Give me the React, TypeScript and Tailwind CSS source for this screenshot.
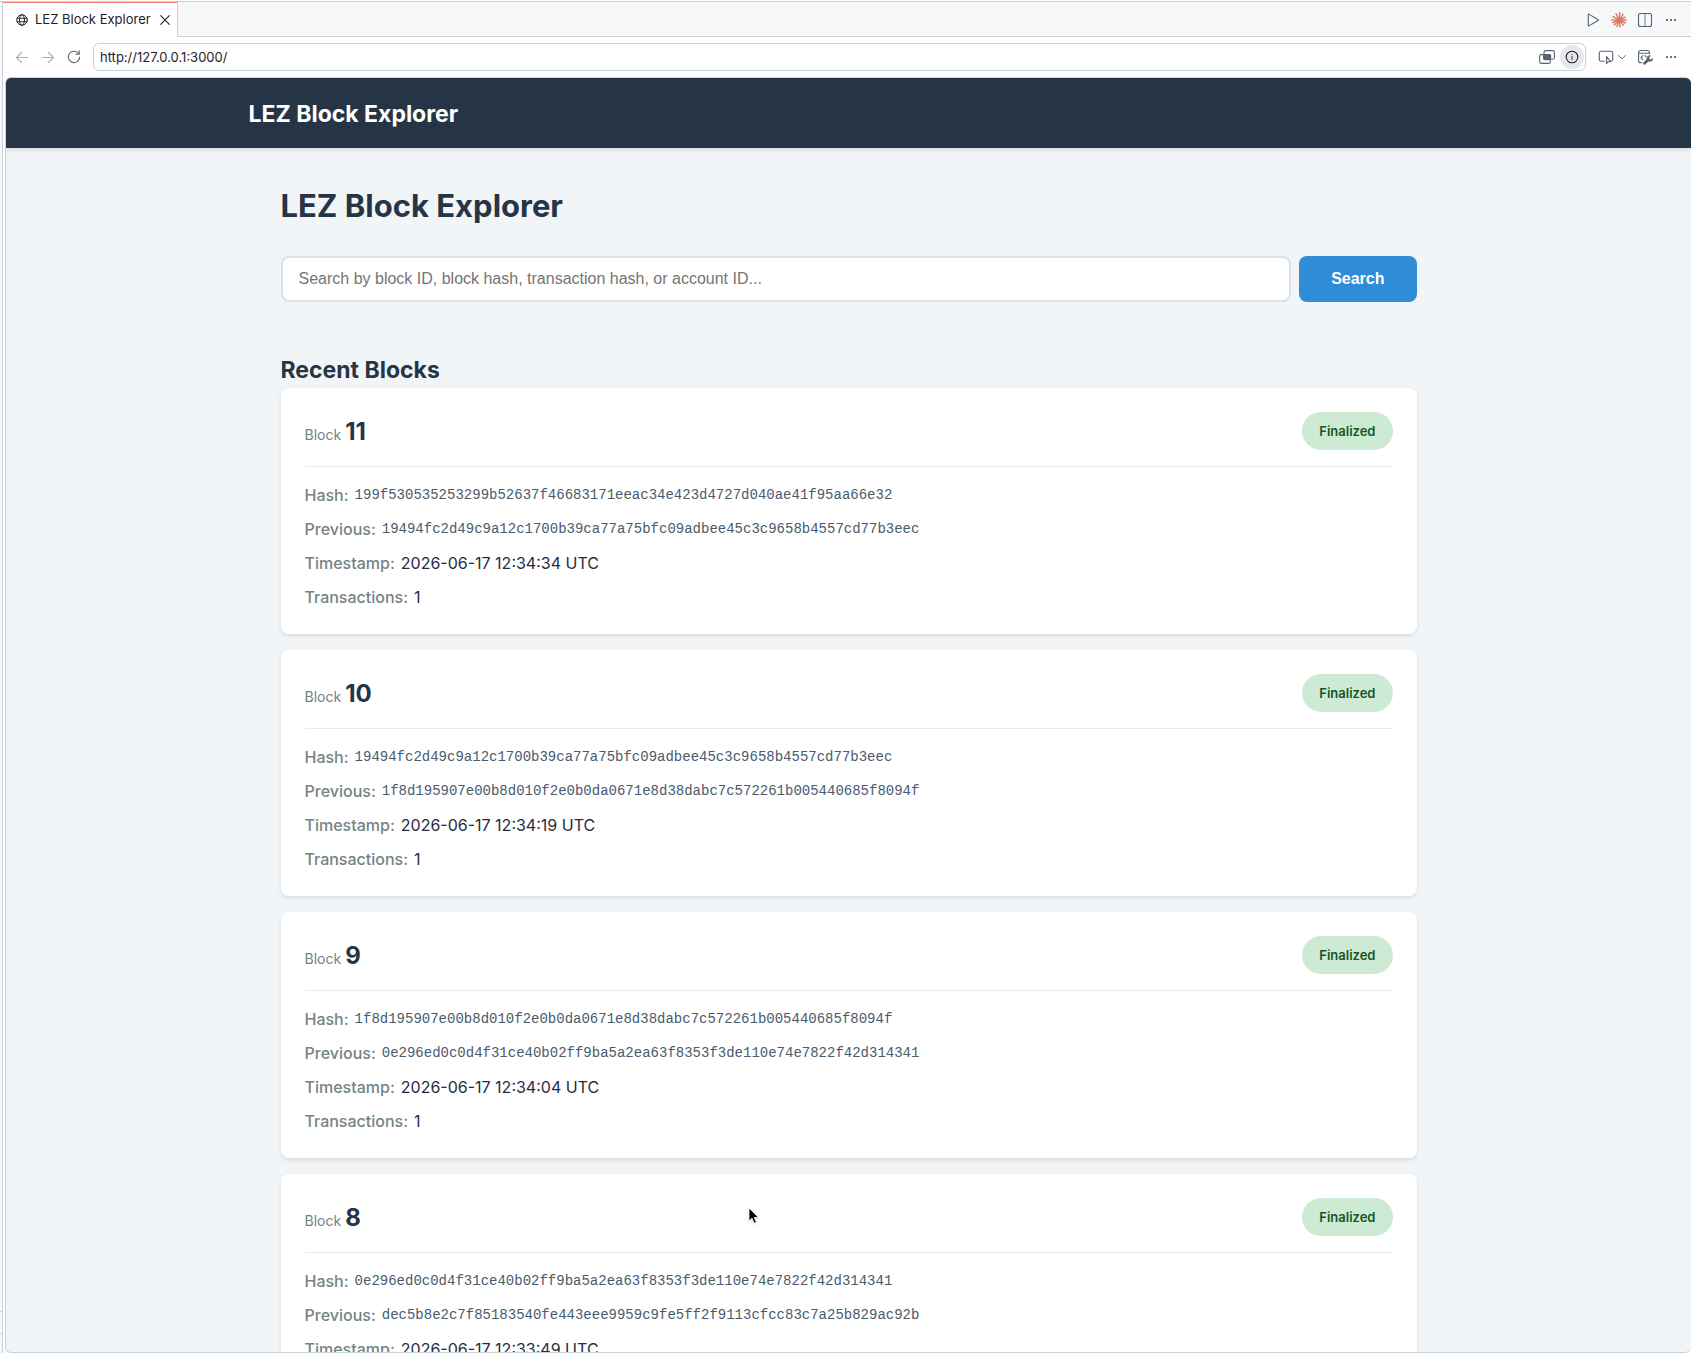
import React from 'react';

const blocks = [
  {
    id: 11,
    hash: '199f530535253299b52637f46683171eeac34e423d4727d040ae41f95aa66e32',
    previous: '19494fc2d49c9a12c1700b39ca77a75bfc09adbee45c3c9658b4557cd77b3eec',
    timestamp: '2026-06-17 12:34:34 UTC',
    transactions: 1,
  },
  {
    id: 10,
    hash: '19494fc2d49c9a12c1700b39ca77a75bfc09adbee45c3c9658b4557cd77b3eec',
    previous: '1f8d195907e00b8d010f2e0b0da0671e8d38dabc7c572261b005440685f8094f',
    timestamp: '2026-06-17 12:34:19 UTC',
    transactions: 1,
  },
  {
    id: 9,
    hash: '1f8d195907e00b8d010f2e0b0da0671e8d38dabc7c572261b005440685f8094f',
    previous: '0e296ed0c0d4f31ce40b02ff9ba5a2ea63f8353f3de110e74e7822f42d314341',
    timestamp: '2026-06-17 12:34:04 UTC',
    transactions: 1,
  },
  {
    id: 8,
    hash: '0e296ed0c0d4f31ce40b02ff9ba5a2ea63f8353f3de110e74e7822f42d314341',
    previous: 'dec5b8e2c7f85183540fe443eee9959c9fe5ff2f9113cfcc83c7a25b829ac92b',
    timestamp: '2026-06-17 12:33:49 UTC',
    transactions: 1,
  },
];

type IconProps = { children: React.ReactNode; className?: string };

function Icon({ children, className = 'size-4' }: IconProps) {
  return (
    <svg
      viewBox="0 0 16 16"
      className={`shrink-0 ${className}`}
      fill="none"
      stroke="currentColor"
      strokeWidth="1.1"
      strokeLinecap="round"
      strokeLinejoin="round"
      aria-hidden="true"
    >
      {children}
    </svg>
  );
}

function IconButton({ label, className = 'text-[#59636e]', children }: { label: string; className?: string; children: React.ReactNode }) {
  return (
    <button type="button" aria-label={label} className={`flex h-6 w-[26px] items-center justify-center ${className}`}>
      {children}
    </button>
  );
}

function Dots() {
  return (
    <Icon>
      <g fill="currentColor" stroke="none">
        <rect x="3" y="7" width="2" height="2" rx="0.5" />
        <rect x="7" y="7" width="2" height="2" rx="0.5" />
        <rect x="11" y="7" width="2" height="2" rx="0.5" />
      </g>
    </Icon>
  );
}

const rays = [
  [8.8, 0.4], [12.4, 1.8], [14.4, 5], [15.8, 8], [14.8, 11], [12.6, 13.6],
  [9.2, 15.6], [5.8, 15], [3, 13.2], [1.2, 10.8], [0.2, 8], [1.6, 4.4], [4.8, 1.2],
];

function Starburst() {
  return (
    <Icon>
      <g strokeWidth="1.4" strokeLinecap="butt">
        {rays.map(([x, y]) => (
          <line key={`${x}-${y}`} x1="8" y1="8" x2={x} y2={y} />
        ))}
      </g>
      <circle cx="8" cy="8" r="2.2" fill="currentColor" stroke="none" />
    </Icon>
  );
}

function TabBar() {
  return (
    <div className="flex h-[35px] shrink-0">
      <div className="flex items-center gap-1.5 border-t border-r border-t-[#f9826c] border-r-[#c9d1d9] bg-white pr-1 pl-3 text-[13px] text-[#1f2328]">
        <Icon className="size-[14px]">
          <circle cx="8" cy="8" r="6" />
          <ellipse cx="8" cy="8" rx="2.8" ry="6" />
          <path d="M2.6 6h10.8M2.6 10h10.8" />
        </Icon>
        <span className="whitespace-nowrap">LEZ Block Explorer</span>
        <button type="button" aria-label="Close tab" className="flex items-center">
          <Icon>
            <path d="M3.7 3.7l8.6 8.6M12.3 3.7l-8.6 8.6" />
          </Icon>
        </button>
      </div>
      <div className="flex flex-1 items-center justify-end border-b border-[#c9d1d9] bg-[#f6f8fa] pt-0.5 pr-[7px]">
        <IconButton label="Run">
          <Icon><path d="M3.3 2.4v11.2c0 .4.3.5.6.3l9.2-5.4c.3-.2.3-.6 0-.8L3.9 2.1c-.3-.2-.6 0-.6.3z" /></Icon>
        </IconButton>
        <IconButton label="Assistant" className="text-[#d97757]"><Starburst /></IconButton>
        <IconButton label="Split editor">
          <Icon>
            <rect x="1.5" y="1.5" width="13" height="13" rx="2" />
            <path d="M8 2v12" strokeWidth="0.8" />
          </Icon>
        </IconButton>
        <IconButton label="More tab actions"><Dots /></IconButton>
      </div>
    </div>
  );
}

function AddressBar() {
  return (
    <div className="flex h-10 shrink-0 items-center bg-white pr-[7px] pl-[6px]">
      <IconButton label="Back" className="text-[#a8adb3]">
        <Icon><path d="M13.5 8.5h-11M7.5 3.5L2.5 8.5l5 5" /></Icon>
      </IconButton>
      <IconButton label="Forward" className="text-[#a8adb3]">
        <Icon><path d="M2.5 8.5h11M8.5 3.5l5 5-5 5" /></Icon>
      </IconButton>
      <IconButton label="Reload">
        <Icon><path d="M12.9 5A5.7 5.7 0 1 0 13.7 8M13.2 1.8V5.3H9.7" /></Icon>
      </IconButton>
      <div className="ml-[6px] flex h-7 flex-1 items-center rounded-md border border-[#c9d1d9] bg-white pr-[1px] pl-[6px]">
        <input
          type="text"
          aria-label="Address"
          defaultValue="http://127.0.0.1:3000/"
          className="min-w-0 flex-1 bg-transparent pt-0.5 text-[13px] text-[#1f2328] outline-none"
        />
        <IconButton label="Share with chat">
          <Icon>
            <rect x="5" y="1.6" width="10.4" height="8.6" rx="1.6" />
            <path d="M4.2 5.6H2.3A1.6 1.6 0 0 0 .7 7.2v5.6a1.6 1.6 0 0 0 1.6 1.6h7.4a1.6 1.6 0 0 0 1.6-1.6v-1.6" />
            <rect x="4.6" y="5.6" width="7" height="5" rx="1" fill="currentColor" />
          </Icon>
        </IconButton>
        <button type="button" aria-label="Site information" className="flex size-6 items-center justify-center rounded-full bg-[#e6e7ed] text-[#1f2328]">
          <Icon>
            <circle cx="8" cy="8" r="5.8" />
            <path d="M8 7.4v3.2M8 5.3v.2" stroke="#59636e" strokeWidth="1.3" />
          </Icon>
        </button>
      </div>
      <button type="button" aria-label="Select element" className="mr-0.5 ml-3 flex h-6 items-center text-[#59636e]">
        <Icon>
          <path d="M6.2 12.2H3.1a1.8 1.8 0 0 1-1.8-1.8V4.1a1.8 1.8 0 0 1 1.8-1.8h9.8a1.8 1.8 0 0 1 1.8 1.8v6.3a1.8 1.8 0 0 1-1 1.6" />
          <path d="M8.5 7.6v7l1.7-1.9h2.6z" />
        </Icon>
        <Icon><path d="M4.5 6.4L8 10l3.5-3.6" strokeWidth="0.9" /></Icon>
      </button>
      <IconButton label="Developer tools">
        <Icon>
          <path d="M5 13.7H3.6a2 2 0 0 1-2-2V3.5a2 2 0 0 1 2-2h6.8a2 2 0 0 1 2 2v1.2M1.6 4.3h10.8M5.8 6.6L4 8.6l1.8 2" />
          <path d="M8 6.6l.9 1" />
          <path d="M7.6 14.2l3.6-3.4" strokeWidth="2.8" />
          <path d="M13.4 6.6a3 3 0 1 0 2.4 2.6l-2 1.5-1.5-.4-.3-1.6z" fill="currentColor" strokeWidth="0.4" />
        </Icon>
      </IconButton>
      <IconButton label="More browser actions"><Dots /></IconButton>
    </div>
  );
}

function Field({ label, children }: { label: string; children: React.ReactNode }) {
  return (
    <div className="flex gap-1.5 leading-[25px]">
      <dt className="font-medium text-[#748383]">{label}:</dt>
      <dd className="text-[#1f2d3d]">{children}</dd>
    </div>
  );
}

function Mono({ children }: { children: string }) {
  return <span className="block font-['Liberation_Mono',monospace] text-[14px] leading-[25px] text-[#4a5b6c]">{children}</span>;
}

function BlockCard({ block }: { block: (typeof blocks)[number] }) {
  return (
    <a href={`#block-${block.id}`} className="block rounded-lg bg-white p-6 shadow-[0_2px_4px_rgba(0,0,0,0.1)]">
      <div className="flex items-center justify-between border-b border-[#e8eaed] pb-4">
        <h3 className="flex h-[38px] items-baseline gap-1 leading-[40px]">
          <span className="text-[14px] text-[#748383]">Block</span>
          <span className="text-[24px] font-bold text-[#263545]">{block.id}</span>
        </h3>
        <span className="rounded-[20px] bg-[#cdead4] px-[17px] text-[13px] leading-[38px] font-semibold text-[#155724]">Finalized</span>
      </div>
      <dl className="mt-4 flex flex-col gap-[9px]">
        <Field label="Hash"><Mono>{block.hash}</Mono></Field>
        <Field label="Previous"><Mono>{block.previous}</Mono></Field>
        <Field label="Timestamp">{block.timestamp}</Field>
        <Field label="Transactions">{block.transactions}</Field>
      </dl>
    </a>
  );
}

function Pointer() {
  return (
    <svg viewBox="0 0 12 18" className="pointer-events-none absolute top-[33px] left-[467px] h-[18px] w-3 drop-shadow-sm" aria-hidden="true">
      <path d="M1 1v13l3-2.8 2.2 5 2.2-1-2.2-4.8h4.3z" fill="#000" stroke="#fff" strokeWidth="0.8" />
    </svg>
  );
}

export default function App() {
  return (
    <div className="flex h-screen overflow-hidden bg-white pt-px font-['Inter',sans-serif]">
      <aside className="flex w-[3px] shrink-0 flex-col justify-end border-t border-r border-[#c9d1d9] bg-[#f6f8fa] pb-[19px]">
        <div className="h-[23px] border-y border-[#c9d1d9]" />
      </aside>
      <div className="flex min-w-0 flex-1 flex-col border-t border-[#c9d1d9]">
        <TabBar />
        <AddressBar />
        <div className="ml-[2px] min-h-0 flex-1 overflow-hidden rounded-md border-y border-l border-[#c9d1d9] bg-[#f1f5f8]">
          <header className="bg-[#263545] shadow-[0_2px_4px_rgba(0,0,0,0.1)]">
            <div className="mx-auto flex h-[70px] max-w-[1200px] items-center pt-0.5">
              <a href="#home" className="text-[23px] font-bold text-white">LEZ Block Explorer</a>
            </div>
          </header>
          <main className="mx-auto max-w-[1200px] px-8 pt-8 text-[16px]">
            <h1 className="text-[31px] leading-[52px] font-bold text-[#263545]">LEZ Block Explorer</h1>
            <form className="mt-6 flex gap-2" onSubmit={(event) => event.preventDefault()}>
              <input
                type="text"
                aria-label="Search"
                placeholder="Search by block ID, block hash, transaction hash, or account ID..."
                className="h-[46px] min-w-0 flex-1 rounded-lg border-2 border-[#dae1ec] bg-white px-4 font-['Liberation_Sans',sans-serif] text-[16px] placeholder:text-[#757575]"
              />
              <button type="submit" className="rounded-lg bg-[#2f8dd8] px-8 font-['Liberation_Sans',sans-serif] text-[16px] font-bold text-white">
                Search
              </button>
            </form>
            <section className="mt-[50px]">
              <h2 className="text-[23px] leading-[36px] font-bold text-[#263545]">Recent Blocks</h2>
              <div className="flex flex-col gap-4">
                {blocks.map((block) => (
                  <div key={block.id} className="relative">
                    <BlockCard block={block} />
                    {block.id === 8 && <Pointer />}
                  </div>
                ))}
              </div>
            </section>
          </main>
        </div>
      </div>
    </div>
  );
}
